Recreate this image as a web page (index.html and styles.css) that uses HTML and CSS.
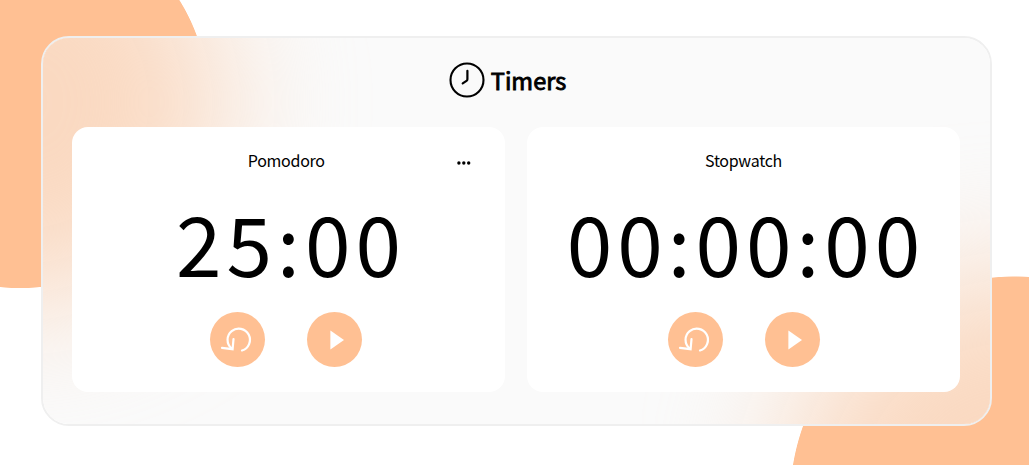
FILE: index.html
```
<!DOCTYPE html>
<html lang="en">
<head>
<meta charset="utf-8">
<title>Timers</title>
<link rel="stylesheet" href="styles.css">
</head>
<body>
<svg class="sprites" aria-hidden="true">
  <symbol id="reset" viewBox="0 0 55 55">
    <path d="M21.6 36.4A11.2 11.2 0 1 1 32 38.5" fill="none" stroke="#fff" stroke-width="2.2" stroke-linecap="round"/>
    <path d="M12 35.8L22.6 37.2L23.5 27.2" fill="none" stroke="#fff" stroke-width="2.2" stroke-linecap="round"/>
  </symbol>
  <symbol id="play" viewBox="0 0 55 55"><path d="M23.4 18.4L37 28L23.4 37.6Z" fill="#fff"/></symbol>
</svg>
<main class="panel">
  <div class="glass"><div class="glow glow-top"></div><div class="glow glow-bottom"></div></div>
  <header class="header">
    <svg class="clock" viewBox="0 0 36 36" fill="none" stroke="#000"><circle cx="18" cy="18" r="16.5" stroke-width="2.1"/><path d="M18.4 8.8V17.2Q18.4 18.2 17.5 18.8L13.7 21.4" stroke-width="2.2" stroke-linecap="round"/></svg>
    <h1 class="title">Timers</h1>
  </header>
  <div class="cards">
    <section class="card card-menu">
      <h2 class="name">Pomodoro</h2>
      <button class="more" aria-label="Options"><svg viewBox="0 0 14 4"><circle cx="1.9" cy="2" r="1.7"/><circle cx="6.8" cy="2" r="1.7"/><circle cx="11.7" cy="2" r="1.7"/></svg></button>
      <div class="time">25:00</div>
      <div class="actions">
        <button class="action" aria-label="Reset"><svg><use href="#reset"/></svg></button>
        <button class="action" aria-label="Start"><svg><use href="#play"/></svg></button>
      </div>
    </section>
    <section class="card">
      <h2 class="name">Stopwatch</h2>
      <div class="time">00:00:00</div>
      <div class="actions">
        <button class="action" aria-label="Reset"><svg><use href="#reset"/></svg></button>
        <button class="action" aria-label="Start"><svg><use href="#play"/></svg></button>
      </div>
    </section>
  </div>
</main>
</body>
</html>
```

FILE: styles.css
```
* { box-sizing: border-box; }
html { overflow: hidden; }
body {
  position: relative;
  height: 465px;
  margin: 0;
  padding: 36px 37.5px 0 40.5px;
  overflow: hidden;
  background:
    radial-gradient(circle at 20px 100px, #ffc093 187.7px, transparent 188.5px),
    radial-gradient(circle at 1015px 501.5px, #ffc093 224.6px, transparent 225.4px),
    #fff;
  color: #000;
  font-family: "Noto Sans CJK JP", "Noto Sans", sans-serif;
}
.sprites { position: absolute; width: 0; height: 0; }
.panel {
  position: relative;
  height: 389.5px;
  padding: 24px 29.5px 0;
  border: 2px solid #efefef;
  border-radius: 28px;
}
/* Frosted backdrop: softened copies of the two circles under a grey tint */
.glass { position: absolute; inset: 0; overflow: hidden; border-radius: 26px; background: #fafafa; }
.glow { position: absolute; border-radius: 50%; background: #fad9c1; filter: blur(65px); }
.glow-top { top: -136px; left: -221px; width: 400px; height: 400px; }
.glow-bottom { top: 233px; left: 742px; width: 460px; height: 460px; }
.header { position: relative; display: flex; align-items: center; justify-content: center; gap: 6px; height: 36px; padding-right: 17px; }
.clock { width: 36px; height: 36px; }
.title { margin: 0; font-size: 23.5px; line-height: 36px; font-weight: 400; -webkit-text-stroke: 0.9px #000; }
.cards { position: relative; display: grid; grid-template-columns: 1fr 1fr; gap: 22px; margin-top: 29.4px; }
.card { position: relative; height: 265px; padding-top: 21px; border-radius: 16px; background: #fff; text-align: center; }
.name { margin: 0; font-size: 16px; line-height: 24px; font-weight: 400; letter-spacing: -0.3px; }
.time { height: 100px; margin-top: 19.5px; padding-left: 5px; font-size: 82px; line-height: 100px; letter-spacing: 5px; white-space: nowrap; }
.actions { display: flex; justify-content: center; gap: 42.5px; margin-top: 20.1px; padding-left: 0.7px; }
.card-menu .name { padding-right: 4.5px; }
.card-menu .actions { padding: 0 5px 0 0; }
.action { width: 55px; height: 55px; padding: 0; border: 0; border-radius: 50%; background: #ffc093; }
.action svg { display: block; width: 55px; height: 55px; }
.more { position: absolute; top: 28px; right: 34px; width: 14px; height: 16px; padding: 0; border: 0; background: none; }
.more svg { display: block; width: 14px; height: 16px; }
```
